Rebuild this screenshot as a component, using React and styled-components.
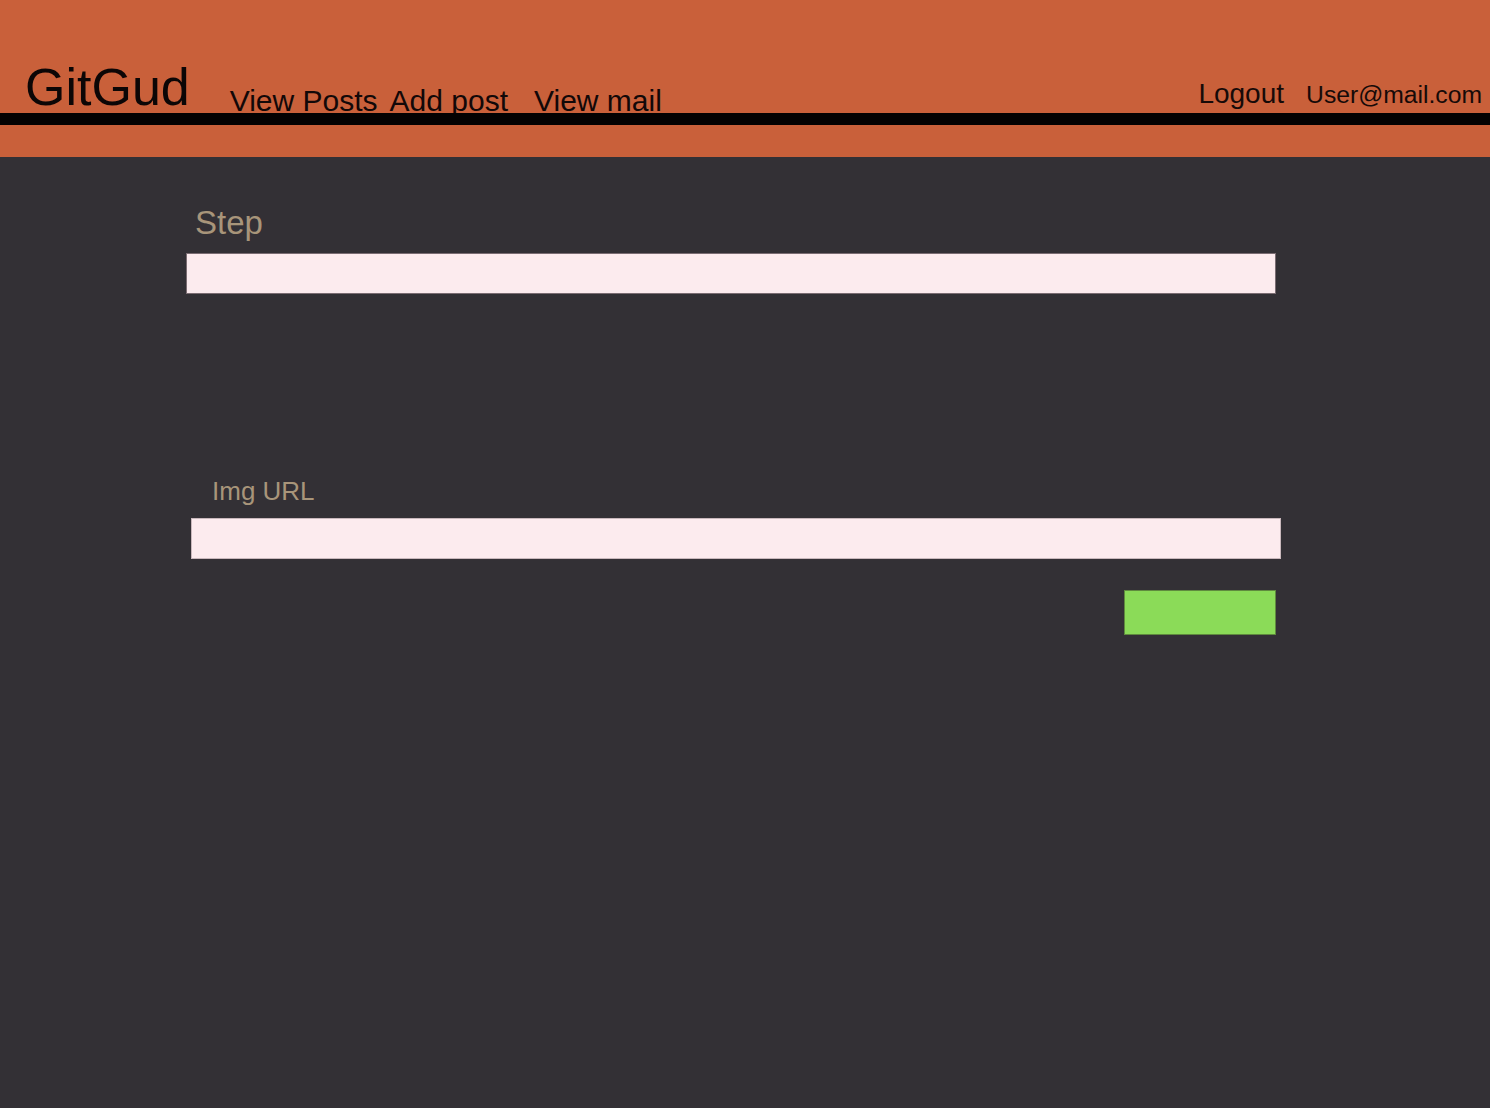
import React from "react";
import styled, { createGlobalStyle } from "styled-components";

const Global = createGlobalStyle`
  html, body { margin: 0; padding: 0; }
  body {
    background: #333035;
    font-family: "Liberation Sans", Arial, sans-serif;
    min-height: 1108px;
  }
`;

const Header = styled.header`
  background: #c9603a;
  height: 157px;
  display: flex;
  flex-direction: column;
`;

const NavRow = styled.div`
  height: 113px;
  display: flex;
  align-items: flex-end;
  padding: 0 8px 0 25px;
`;

const Logo = styled.div`
  font-size: 52px;
  line-height: 1;
  color: #0c0606;
`;

const Links = styled.nav`
  display: flex;
  align-items: baseline;
  margin-left: 40px;
  margin-bottom: -3px;
`;

const NavLink = styled.a`
  font-size: 30px;
  line-height: 1;
  color: #120808;
  text-decoration: none;
  margin-left: ${(p) => p.$gap || 0}px;
  margin-bottom: ${(p) => p.$drop || 0}px;
`;

const Spacer = styled.div`
  flex: 1;
`;

const UserArea = styled.div`
  display: flex;
  align-items: baseline;
  margin-bottom: 5px;
`;

const UserLink = styled.span`
  font-size: ${(p) => p.$size}px;
  line-height: 1;
  color: #160a08;
  margin-left: ${(p) => p.$gap || 0}px;
`;

const Rule = styled.div`
  height: 12px;
  background: #040202;
`;

const Main = styled.main`
  padding: 49px 0 0 186px;
  width: 1096px;
  display: flex;
  flex-direction: column;
`;

const Field = styled.div`
  display: flex;
  flex-direction: column;
  padding-left: ${(p) => p.$indent || 0}px;
  margin-top: ${(p) => p.$top || 0}px;
`;

const Label = styled.label`
  font-size: ${(p) => p.$size}px;
  line-height: 1;
  color: #a8957a;
  margin-left: ${(p) => p.$offset}px;
  margin-bottom: 14px;
`;

const Input = styled.input`
  box-sizing: border-box;
  width: 1090px;
  height: 41px;
  background: #fcebee;
  border: 1px solid ${(p) => (p.$bordered ? "#7a6c72" : "#c9b8bc")};
  outline: none;
  margin: 0;
  padding: 0 10px;
  font-family: inherit;
  font-size: 18px;
`;

const Actions = styled.div`
  display: flex;
  justify-content: flex-end;
  margin-top: 31px;
  padding-right: 6px;
`;

const Submit = styled.button`
  width: 152px;
  height: 45px;
  background: #8bdb58;
  border: 1px solid #5f8a3e;
  padding: 0;
  cursor: pointer;
`;

export default function App() {
  return (
    <>
      <Global />
      <Header>
        <NavRow>
          <Logo>GitGud</Logo>
          <Links>
            <NavLink href="#">View Posts</NavLink>
            <NavLink href="#" $gap={12}>Add post</NavLink>
            <NavLink href="#" $gap={26} $drop={-1}>View mail</NavLink>
          </Links>
          <Spacer />
          <UserArea>
            <UserLink $size={28}>Logout</UserLink>
            <UserLink $size={24.7} $gap={22}>User@mail.com</UserLink>
          </UserArea>
        </NavRow>
        <Rule />
      </Header>
      <Main>
        <Field>
          <Label $size={33} $offset={9}>Step</Label>
          <Input $bordered type="text" />
        </Field>
        <Field $indent={5} $top={184}>
          <Label $size={26} $offset={21}>Img URL</Label>
          <Input type="text" />
        </Field>
        <Actions>
          <Submit aria-label="Submit" />
        </Actions>
      </Main>
    </>
  );
}
